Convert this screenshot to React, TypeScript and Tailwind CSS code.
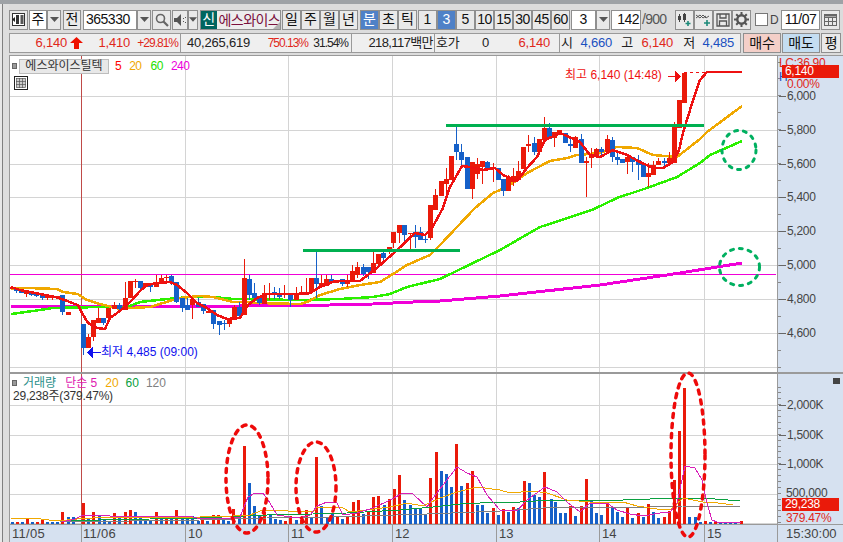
import React from "react";

type C = [number, "r" | "b", number, number, number?, number?];
const seg = (base: number, rows: C[]) =>
  rows.map(([x, c, t, b, h, l]) => ({
    x,
    c,
    t: base + t / 3,
    b: base + b / 3,
    h: base + (h ?? t) / 3,
    l: base + (l ?? b) / 3,
  }));

const candles = [
  ...seg(270, [
    [12, "r", 50, 58, 48, 58], [16, "b", 54, 64, 54, 70], [21, "b", 60, 68], [26, "r", 65, 72, 65, 80],
    [31, "b", 63, 75, 63, 78], [36, "b", 70, 78, 70, 80], [42, "b", 72, 85, 72, 90], [47, "r", 75, 85, 75, 91],
    [52, "r", 78, 85, 78, 91], [57, "r", 78, 85, 78, 88], [62, "b", 75, 125, 75, 134], [68, "r", 125, 134],
  ]),
  ...seg(250, [
    [83, "b", 222, 295, 222, 315], [88, "r", 262, 295, 252], [93, "r", 210, 262, 210, 272], [98, "r", 205, 218, 175],
    [103, "b", 205, 218, 205, 225], [108, "r", 175, 205], [114, "r", 165, 178, 155], [119, "b", 165, 178, 160, 186],
    [125, "r", 145, 180, 95], [130, "r", 93, 145], [135, "r", 92, 95, 88, 115], [140, "b", 92, 115, 92, 125],
    [145, "r", 100, 112], [150, "b", 105, 110, 105, 125], [156, "r", 95, 110, 75], [161, "r", 84, 95, 75],
    [166, "r", 80, 85, 74, 95], [171, "b", 78, 95, 75, 105], [176, "b", 95, 155, 95, 160], [182, "b", 145, 175, 145, 185],
    [187, "b", 165, 180, 145], [192, "r", 148, 165, 148, 206], [198, "b", 155, 172, 145], [203, "b", 163, 182, 163, 192],
    [208, "r", 182, 190], [213, "b", 180, 222, 180, 238], [219, "b", 213, 225, 213, 255], [224, "b", 218, 222, 210, 240],
    [229, "r", 205, 222, 205, 232], [234, "r", 170, 210, 165], [239, "b", 172, 198, 155, 205], [244, "r", 85, 195, 27],
    [249, "b", 88, 135, 75, 150], [254, "b", 128, 145, 100, 155], [259, "b", 138, 160, 138, 165], [264, "r", 130, 162, 105],
    [269, "r", 128, 135, 100, 150], [274, "b", 125, 133, 110, 147], [279, "b", 130, 140, 115, 148], [284, "r", 130, 135, 105, 145],
    [290, "b", 135, 150, 135, 170], [296, "r", 130, 150, 110, 150],
  ]),
  ...seg(215, [
    [301, "r", 230, 240, 212], [306, "r", 232, 240, 188], [311, "r", 190, 230], [316, "b", 188, 207, 110, 250],
    [321, "r", 203, 213, 180], [326, "r", 193, 213, 180], [331, "b", 193, 200, 180, 205], [336, "r", 198, 205],
    [342, "b", 192, 207, 192, 212], [347, "r", 195, 207, 180, 215], [352, "r", 168, 200, 150], [357, "r", 155, 180, 140, 190],
    [363, "b", 155, 178, 148, 182], [368, "b", 155, 172, 155, 192], [373, "r", 145, 175, 110], [378, "r", 117, 147, 117, 150],
    [383, "b", 115, 130, 108, 135], [389, "r", 95, 110, 95, 118], [393, "r", 52, 85, 52, 100], [399, "r", 30, 53, 30, 85],
    [404, "b", 30, 60, 30, 85], [410, "r", 53, 56, 53, 105], [415, "b", 52, 65, 30, 98], [420, "b", 52, 75, 35],
    [425, "b", 72, 74, 60, 85], [430, "r", -30, 70, -30, 75],
  ]),
  ...seg(100, [
    [435, "r", 285, 330, 268], [441, "r", 243, 288], [446, "r", 237, 252, 205, 285], [451, "r", 168, 240],
    [456, "b", 132, 155, 80, 180], [461, "b", 155, 180, 132, 205], [467, "b", 172, 267], [472, "r", 185, 267, 185, 297],
    [477, "r", 193, 222, 175, 237], [482, "r", 183, 202, 183, 252], [487, "b", 185, 210, 183], [493, "r", 204, 207, 190, 245],
    [498, "b", 205, 240], [503, "b", 237, 273, 237, 288], [508, "r", 235, 273, 225], [513, "r", 228, 245, 205, 258],
    [518, "r", 213, 240, 183], [523, "r", 140, 207], [528, "r", 132, 137, 105, 155], [534, "b", 130, 155, 110, 165],
    [539, "r", 118, 155], [544, "r", 85, 120, 52], [549, "b", 85, 117, 70], [554, "r", 95, 115, 95, 140],
    [559, "r", 90, 100], [565, "b", 98, 128], [570, "b", 132, 137, 115, 155], [575, "r", 112, 145, 108],
    [581, "b", 118, 188, 103], [586, "r", 183, 188, 170, 290], [591, "r", 168, 175, 145, 205], [596, "r", 148, 170, 145],
    [601, "b", 148, 155, 140, 172], [607, "r", 118, 155, 105], [612, "b", 120, 172, 110, 187], [617, "b", 172, 180, 155, 195],
    [622, "b", 178, 188], [627, "r", 170, 185, 170, 222], [632, "b", 170, 185, 170, 215], [638, "b", 180, 195, 165, 240],
    [643, "b", 190, 230], [648, "r", 220, 232, 190, 260], [653, "r", 195, 225, 183], [658, "r", 183, 195, 175],
    [664, "b", 183, 188, 175, 205], [669, "r", 175, 190, 155], [674, "r", 80, 190, 67],
  ]),
  ...seg(50, [[679, "r", 150, 235], [684, "r", 70, 160]]),
];

const vols: [number, "r" | "b", number][] = [
  [12,"b",2],[17,"r",2],[22,"b",2],[27,"r",5],[32,"b",2],[37,"r",2],[42,"r",4],[47,"b",2],[52,"b",2],[57,"b",2],
  [62,"r",12],[68,"b",7],[73,"b",7],[83,"r",21],[88,"b",6],[93,"r",12],[99,"b",8],[104,"b",4],[109,"b",2],[114,"r",11],
  [119,"b",6],[125,"r",12],[130,"r",14],[135,"b",12],[140,"b",7],[145,"b",3],[150,"b",3],[156,"r",12],[161,"b",6],[166,"r",6],
  [171,"b",7],[176,"r",14],[182,"b",8],[187,"b",8],[192,"b",8],[198,"b",3],
  [202,"r",6],[207,"b",3],[213,"r",9],[218,"r",9],[223,"b",5],[228,"b",3],[233,"r",15],[239,"b",8],[244,"r",78],[249,"b",41],
  [254,"b",18],[259,"b",9],[264,"r",12],[270,"b",10],[275,"b",5],[280,"b",4],[285,"r",3],[290,"r",8],[296,"b",4],[301,"r",4],
  [306,"r",14],[311,"b",7],[316,"r",67],[321,"b",18],[327,"b",6],[332,"b",10],[337,"r",7],[342,"b",5],[347,"r",8],[353,"r",22],
  [358,"r",24],[363,"b",10],[368,"r",12],[373,"r",27],[378,"r",28],[384,"b",19],[389,"r",25],[394,"r",35],[399,"r",49],[404,"b",24],
  [410,"b",19],[415,"b",15],[420,"b",15],[425,"b",9],[430,"r",46],[436,"r",72],[441,"b",53],[446,"b",50],[451,"b",37],[456,"r",80],
  [461,"b",38],[467,"r",41],[472,"r",53],[477,"b",19],[482,"b",19],[487,"b",11],[493,"r",16],[498,"b",9],[503,"r",15],[508,"b",12],
  [513,"r",17],[518,"b",16],[524,"r",43],[529,"b",41],[534,"b",29],[539,"b",27],[544,"r",52],[551,"b",25],[555,"b",22],[560,"b",11],
  [565,"b",11],[570,"r",18],[575,"b",8],[581,"r",18],[586,"r",45],[591,"b",24],[596,"b",11],[601,"b",9],[607,"r",22],[612,"b",16],
  [617,"b",12],[622,"b",7],[627,"r",16],[632,"b",6],[638,"r",11],[643,"b",7],[648,"r",20],[653,"b",12],[658,"b",6],[664,"r",7],
  [669,"r",13],[674,"r",44],[679,"r",93],[684,"r",136],[689,"b",7],[695,"b",7],[700,"b",2],[705,"r",3],[710,"b",2],[715,"r",3],
  [720,"b",1],[725,"b",1],[730,"b",1],[735,"b",1],[741,"r",3],
];

const ma5 = "11,287 20,290 35,293 45,295 55,297 65,300 72,303 78,305 82,313 88,323 97,328 105,329 110,318 117,313 125,307 132,300 140,291 147,285 157,283 170,282 177,285 187,293 197,303 207,308 217,315 227,319 240,318 248,305 257,298 267,294 297,294 310,293 320,287 335,281 360,281 378,267 395,252 415,233 425,235 432,228 443,208 450,187 462,166 470,167 483,170 495,168 503,175 517,181 527,168 537,157 545,140 560,133 567,136 580,142 590,155 600,157 613,150 627,155 640,162 653,168 663,168 673,162 679,150 683,133 690,110 700,80 707,72 742,72";
const ma20 = "11,289 27,288 57,289 63,292 78,294 87,300 100,304 120,309 130,308 150,307 163,303 180,298 200,296 213,297 233,302 247,302 257,303 300,304 307,302 320,295 340,289 360,285 380,282 393,274 407,265 430,255 440,245 475,208 493,193 507,187 527,173 550,161 567,158 577,155 600,153 617,147 637,148 653,155 677,157 700,139 707,132 742,106";
const ma60 = "11,314 33,311 53,308 100,307 127,307 140,302 167,299 190,297 213,297 233,299 300,300 340,299 373,297 390,294 407,287 440,279 500,250 540,227 592,210 617,198 647,188 677,177 700,163 710,155 742,141";
const ma240 = "11,306 53,306 73,306 130,306 240,306 330,305 373,304 413,302 440,301 500,296 600,285 680,273 742,263";

const vMag = "62,522 75,519 83,515 95,516 105,515 115,517 125,516 135,516 160,517 190,516 200,519 233,518 240,517 248,497 255,493 263,493 270,503 277,515 297,518 310,515 317,506 327,502 337,503 343,515 357,513 373,508 390,500 403,493 413,494 427,507 433,498 457,467 467,473 477,477 487,495 500,510 517,511 527,500 545,487 557,492 567,502 580,512 590,503 607,503 617,510 630,514 643,516 660,513 670,512 677,503 685,466 695,468 702,480 708,507 712,520 717,522 741,522";
const vYel = "11,518 33,518 57,521 77,519 110,517 200,517 233,516 250,515 263,510 313,512 317,507 343,508 350,512 390,507 407,503 423,506 440,498 457,492 477,487 500,490 510,493 533,491 547,493 567,500 590,502 623,502 637,506 657,509 670,510 683,498 703,502 718,503 733,505";
const vGrn = "60,521 100,520 200,518 267,515 313,514 347,513 400,510 433,507 460,504 500,502 520,502 553,500 623,500 677,498 703,498 740,501";
const vGry = "60,522 200,520 267,518 333,517 427,514 500,511 543,508 650,507 683,506 740,506";

const dayX = [81, 185, 288, 392, 496, 599, 704];
const RED = "#ea1a0a";
const BLUE = "#1560c8";

const priceY = [96, 130, 164, 197, 231, 265, 299, 333];
const priceL = ["6,000", "5,800", "5,600", "5,400", "5,200", "5,000", "4,800", "4,600"];
const minorUp = Array.from({ length: 19 }, (_, i) => 62 + i * 16.95);
const minorDn = Array.from({ length: 24 }, (_, i) => 387 + i * 5.9);

function Btn({
  w,
  ml = "",
  bg = "bg-[#e9e9e9]",
  children,
  cls = "text-[#111]",
}: {
  w: string;
  ml?: string;
  bg?: string;
  children?: React.ReactNode;
  cls?: string;
}) {
  return (
    <div className={`${w} ${ml} ${bg} ${cls} h-[20px] flex items-center border border-[#8f8f8f] text-[14px] ${cls.includes("justify-") ? "" : "justify-center"}`}>
      {children}
    </div>
  );
}

function Arrow({ w, ml = "" }: { w: string; ml?: string }) {
  return (
    <Btn w={w} ml={ml}>
      <svg width="9" height="5" viewBox="0 0 9 5"><path d="M0 0h9L4.500 5z" fill="#555" /></svg>
    </Btn>
  );
}

export default function App() {
  return (
    <div
      className="w-[843px] h-[542px] overflow-hidden flex flex-col bg-[#dcdcdc] text-[#222]"
      style={{ fontFamily: '"Liberation Sans","Noto Sans CJK KR",sans-serif' }}
    >
      <div className="h-[4px] shrink-0 bg-[#9ea2a6]" />
      <div className="flex flex-1 min-h-0">
        <div className="w-[9px] shrink-0 flex">
          <div className="w-[2px] bg-[#e8e8e8]" />
          <div className="w-[1px] bg-[#808080]" />
          <div className="flex-1 bg-[#dedede]" />
        </div>
        <div className="flex-1 min-w-0 flex flex-col">
          {/* toolbar */}
          <div className="flex items-center h-[21px] mt-[5px] shrink-0">
            <Btn w="w-[19px]">
              <svg width="15" height="15" viewBox="0 0 15 15">
                <rect x="1.500" y="1.500" width="12" height="12" fill="#fff" stroke="#333" />
                <rect x="5" y="3" width="3" height="9" fill="#333" />
                <rect x="9.500" y="3" width="3" height="9" fill="#555" />
                <path d="M4 5v5L1 7.500z" fill="#222" />
              </svg>
            </Btn>
            <Btn w="w-[18px]" ml="ml-[1px]" bg="bg-white">주</Btn>
            <Arrow w="w-[14px]" />
            <Btn w="w-[18px]" ml="ml-[2px]">전</Btn>
            <Btn w="w-[54px]" ml="ml-[2px]" bg="bg-white" cls="text-[#111] justify-start pl-[2px] tracking-[-0.5px]">365330</Btn>
            <Arrow w="w-[14px]" />
            <Btn w="w-[19px]" ml="ml-[1px]">
              <svg width="14" height="14" viewBox="0 0 14 14" fill="none" stroke="#666" strokeWidth="1.600">
                <circle cx="5.500" cy="5.500" r="4" />
                <path d="M8.500 8.500L13 13" strokeWidth="2.200" />
              </svg>
            </Btn>
            <Btn w="w-[16px]" ml="ml-[1px]">
              <svg width="13" height="12" viewBox="0 0 13 12"><path d="M0 4h3l4-4v12L3 8H0z" fill="#555" /><path d="M9 4h1v1H9zM11 3h1v1h-1zM9 7h1v1H9zM11 8h1v1h-1z" fill="#555" /></svg>
            </Btn>
            <Arrow w="w-[10px]" />
            <div className="ml-[2px] w-[81px] h-[20px] flex border border-[#8f8f8f] bg-[#ededed] relative overflow-hidden">
              <div className="w-[17px] bg-[#00655f] text-white text-[14px] flex items-center justify-center">신</div>
              <div className="pl-[2px] text-[14px] tracking-[-0.6px] text-[#7a0f3c] whitespace-nowrap leading-[18px]">에스와이스</div>
              <div className="absolute right-0 bottom-0 w-0 h-0 border-l-[7px] border-l-transparent border-b-[7px] border-b-[#b0b0b0]" />
            </div>
            <Btn w="w-[19px]" ml="ml-[1px]">일</Btn>
            <Btn w="w-[19px]">주</Btn>
            <Btn w="w-[19px]">월</Btn>
            <Btn w="w-[19px]">년</Btn>
            <Btn w="w-[19px]" ml="ml-[2px]" bg="bg-[#4f81c7]" cls="text-white">분</Btn>
            <Btn w="w-[19px]">초</Btn>
            <Btn w="w-[19px]">틱</Btn>
            <Btn w="w-[19px]" ml="ml-[1px]">1</Btn>
            <Btn w="w-[19px]" bg="bg-[#4f81c7]" cls="text-white">3</Btn>
            <Btn w="w-[19px]">5</Btn>
            <Btn w="w-[19px]" cls="text-[#111] tracking-[-0.5px]">10</Btn>
            <Btn w="w-[19px]" cls="text-[#111] tracking-[-0.5px]">15</Btn>
            <Btn w="w-[19px]" cls="text-[#111] tracking-[-0.5px]">30</Btn>
            <Btn w="w-[19px]" cls="text-[#111] tracking-[-0.5px]">45</Btn>
            <Btn w="w-[19px]" cls="text-[#111] tracking-[-0.5px]">60</Btn>
            <Btn w="w-[25px]" ml="ml-[1px]" bg="bg-white">3</Btn>
            <Arrow w="w-[14px]" />
            <Btn w="w-[30px]" ml="ml-[1px]" bg="bg-white" cls="text-[#111] justify-end pr-[1px] tracking-[-0.5px]">142</Btn>
            <div className="w-[34px] text-[14px] text-[#555] pl-[1px] tracking-[-0.7px]">/900</div>
            <Btn w="w-[19px]">
              <svg width="15" height="13" viewBox="0 0 15 13"><path d="M1 3h3v4H1zM6 1h3v6H6z" fill="#444" /><path d="M2.500 1v8M7.500 0v9" stroke="#444" /><path d="M11 8v5M8.500 10.500h5" stroke="#1d8a7a" strokeWidth="1.600" /></svg>
            </Btn>
            <Btn w="w-[19px]">
              <svg width="16" height="13" viewBox="0 0 16 13" fill="none"><path d="M0 2l4 3 3-3 3 3 3-2M0 5l4-3 3 3 3-2" stroke="#555" /><path d="M11 7v6M8 10h6" stroke="#1d8a7a" strokeWidth="1.600" /></svg>
            </Btn>
            <Btn w="w-[19px]">
              <svg width="14" height="14" viewBox="0 0 14 14" fill="none" stroke="#555" strokeWidth="1.300"><path d="M1 1h12v12H1z" /><path d="M4 1v4h6V1M3.500 13V8h7v5" /></svg>
            </Btn>
            <Btn w="w-[19px]">
              <svg width="15" height="15" viewBox="0 0 15 15"><circle cx="7.500" cy="7.500" r="4.200" fill="none" stroke="#555" strokeWidth="2.400" /><path d="M7.500 0v3M7.500 12v3M0 7.500h3M12 7.500h3M2.200 2.200l2 2M10.800 10.800l2 2M12.800 2.200l-2 2M4.200 10.800l-2 2" stroke="#555" strokeWidth="2" /></svg>
            </Btn>
            <div className="ml-[4px] w-[13px] h-[13px] bg-white border border-[#777]" />
            <div className="w-[10px] ml-[2px] text-[12px] text-[#444]">D</div>
            <Btn w="w-[39px]" ml="ml-[1px]" bg="bg-white" cls="text-[#111] tracking-[-0.5px]">11/07</Btn>
            <Btn w="w-[19px]" ml="ml-[1px]">
              <svg width="13" height="12" viewBox="0 0 13 12" fill="none" stroke="#666"><rect x="0.500" y="0.500" width="12" height="11" /><path d="M0 3.500h13M0 7.500h13M4.500 3v9M8.500 3v9" /><path d="M0 1.500h13" strokeWidth="2" /></svg>
            </Btn>
          </div>
          {/* info row */}
          <div className="flex items-center h-[20px] mt-[3px] shrink-0 text-[13px] tracking-[-0.2px]">
            <div className="w-[732px] h-[20px] flex bg-[#efefef] border border-[#9a9a9a] leading-[18px] whitespace-nowrap">
              <div className="w-[171px] flex border-r border-[#9a9a9a] text-[#e0281a]">
                <span className="w-[57px] text-right">6,140</span>
                <svg className="ml-[3px] mt-[3px]" width="13" height="12" viewBox="0 0 13 12"><path d="M6.500 0L13 6H9v6H4V6H0z" fill="#ee1100" /></svg>
                <span className="w-[47px] text-right">1,410</span>
                <span className="w-[48px] text-right text-[12px] tracking-[-1px]">+29.81%</span>
              </div>
              <div className="w-[171px] flex border-r border-[#9a9a9a]">
                <span className="w-[69px] text-right">40,265,619</span>
                <span className="w-[58px] text-right text-[#e0281a] text-[12px] tracking-[-1px]">750.13%</span>
                <span className="w-[40px] text-right text-[12px] tracking-[-1px]">31.54%</span>
              </div>
              <div className="w-[83px] border-r border-[#9a9a9a] text-right pr-[1px] tracking-[-0.6px]">218,117백만</div>
              <div className="w-[125px] flex border-r border-[#9a9a9a]">
                <span className="w-[28px] pl-[1px]">호가</span>
                <span className="w-[26px] text-right">0</span>
                <span className="w-[61px] text-right text-[#e0281a]">6,140</span>
              </div>
              <div className="flex-1 flex">
                <span className="w-[12px] pl-[1px]">시</span>
                <span className="w-[40px] text-right text-[#1a4fc0]">4,660</span>
                <span className="w-[21px] text-right">고</span>
                <span className="w-[40px] text-right text-[#e0281a]">6,140</span>
                <span className="w-[22px] text-right">저</span>
                <span className="w-[39px] text-right text-[#1a4fc0]">4,485</span>
              </div>
            </div>
            <Btn w="w-[38px]" ml="ml-[2px]" bg="bg-[#f4cfc8]">매수</Btn>
            <Btn w="w-[38px]" ml="ml-[1px]" bg="bg-[#c4ddf1]">매도</Btn>
            <Btn w="w-[20px]" ml="ml-[1px]">평</Btn>
          </div>
          {/* chart */}
          <div className="mt-[2px] flex-1 min-h-0 flex flex-col border-t border-l border-[#9a9a9a] bg-white">
            <div className="h-[316px] shrink-0 flex">
              <div className="relative w-[767px] shrink-0">
                <svg width="767" height="316" viewBox="10 56 767 316" className="block" shapeRendering="crispEdges">
                  {[...priceY, 367].map((y) => <line key={y} x1="10" x2="777" y1={y} y2={y} stroke="#d4d4d4" />)}
                  {dayX.map((x) => <line key={x} x1={x} x2={x} y1="56" y2="372" stroke="#d4d4d4" />)}
                  <line x1="81" x2="81" y1="56" y2="372" stroke="#bf4a48" />
                  <line x1="10" x2="776" y1="274.500" y2="274.500" stroke="#f000d8" />
                  <polyline points={ma240} fill="none" stroke="#f000d8" strokeWidth="3" />
                  <polyline points={ma60} fill="none" stroke="#2cf000" strokeWidth="2.500" />
                  <polyline points={ma20} fill="none" stroke="#f0a800" strokeWidth="2.500" />
                  {candles.map((k, i) => (
                    <g key={i} fill={k.c === "r" ? RED : BLUE}>
                      <rect x={k.x} y={k.h} width="1" height={Math.max(1, k.l - k.h)} />
                      <rect x={k.x - 2} y={k.t} width="4.500" height={Math.max(1, k.b - k.t)} />
                    </g>
                  ))}
                  <polyline points={ma5} fill="none" stroke="#ee1111" strokeWidth="2.500" />
                  <line x1="303" x2="460" y1="250" y2="250" stroke="#00b050" strokeWidth="3" />
                  <line x1="446" x2="704" y1="125.500" y2="125.500" stroke="#00b050" strokeWidth="3" />
                  <line x1="684" x2="706" y1="72.500" y2="72.500" stroke="#ee1111" strokeDasharray="3 3" />
                  <path d="M668 76.500h8" stroke="#ee1111" />
                  <path d="M675 71v11l6-5.500z" fill="#ee1111" />
                  <path d="M101 352.500H92" stroke="#1010ee" />
                  <path d="M93 347v11l-6-5.500z" fill="#1010ee" />
                  <g shapeRendering="geometricPrecision" fill="none" strokeLinecap="round">
                    <ellipse cx="739" cy="150" rx="17" ry="19.500" stroke="#00b060" strokeWidth="3" strokeDasharray="3 6" />
                    <ellipse cx="739.500" cy="267" rx="20" ry="18.500" stroke="#00b060" strokeWidth="3" strokeDasharray="3 6" />
                  </g>
                </svg>
                <div className="absolute left-[1px] top-[0px] flex items-center h-[20px] text-[12px] tracking-[-0.5px] leading-none whitespace-nowrap">
                  <div className="w-[5px] h-[6px] ml-[1px] bg-[#999] border border-[#666]" />
                  <div className="ml-[2px] w-[90px] h-[15px] bg-[#e8e8e8] border border-[#bdbdbd] text-[#333] text-center leading-[13px] tracking-normal">에스와이스틸텍</div>
                  <span className="ml-[6px] text-[#f00]">5</span>
                  <span className="ml-[8px] text-[#f0a800]">20</span>
                  <span className="ml-[9px] text-[#22e000]">60</span>
                  <span className="ml-[8px] text-[#ee00dd]">240</span>
                </div>
                <div className="absolute left-[4px] top-[20px] w-[14px] h-[14px] border border-[#222] bg-white flex items-center justify-center">
                  <svg width="10" height="10" viewBox="0 0 10 10" fill="#ccc" stroke="#555" strokeWidth="0.700"><rect x="0.500" y="0.500" width="9" height="9" /><path d="M0 3.500h10M0 6.500h10M3.500 0v10M6.500 0v10" /></svg>
                </div>
                <div className="absolute left-[555px] top-[12px] text-[12px] text-[#ee1111] whitespace-nowrap leading-[14px]">최고 6,140 (14:48)</div>
                <div className="absolute left-[91px] top-[289px] text-[12px] text-[#1010ee] whitespace-nowrap leading-[14px]">최저 4,485 (09:00)</div>
              </div>
              <div className="relative flex-1 bg-[#d6e1f0] border-l border-[#9a9a9a] overflow-hidden text-[12px] leading-[14px] tracking-[-0.3px] text-[#444]">
                <svg width="4" height="316" viewBox="0 56 4 316" className="absolute left-0 top-0" shapeRendering="crispEdges">
                  {minorUp.map((y) => <line key={y} x1="0" x2="3" y1={y} y2={y} stroke="#888" />)}
                </svg>
                <div className="absolute left-[1px] top-[0px] text-[#e0281a] whitespace-nowrap">LC:36.90</div>
                <div className="absolute left-[1px] top-[14px] text-[#1a4fc0]">H</div>
                <div className="absolute left-[9px] top-[21px] text-[#e0281a]">0.00%</div>
                {priceY.map((y, i) => (
                  <div key={y} className="absolute left-[1px] flex items-center" style={{ top: y - 63 }}>
                    <div className="w-[7px] h-[1px] bg-[#666] mr-[1px]" />
                    {priceL[i]}
                  </div>
                ))}
                <div className="absolute left-[4px] top-[9px] w-[57px] h-[13px] bg-[#ea1a0a] text-white leading-[13px] pl-[3px]">6,140</div>
              </div>
            </div>
            <div className="h-[2px] shrink-0 bg-[#9a9a9a]" />
            <div className="h-[150px] shrink-0 flex">
              <div className="relative w-[767px] shrink-0">
                <svg width="767" height="150" viewBox="10 374 767 150" className="block overflow-visible" shapeRendering="crispEdges">
                  {[405, 435, 464, 494, 523].map((y) => <line key={y} x1="10" x2="777" y1={y} y2={y} stroke="#d4d4d4" />)}
                  {dayX.map((x) => <line key={x} x1={x} x2={x} y1="374" y2="524" stroke="#d4d4d4" />)}
                  <line x1="81" x2="81" y1="374" y2="524" stroke="#bf4a48" />
                  {vols.map(([x, c, h], i) => (
                    <rect key={i} x={x - 1.500} y={524 - h} width="3.500" height={h} fill={c === "r" ? RED : BLUE} />
                  ))}
                  <polyline points={vGry} fill="none" stroke="#808080" />
                  <polyline points={vGrn} fill="none" stroke="#0aa040" />
                  <polyline points={vYel} fill="none" stroke="#f0a800" />
                  <polyline points={vMag} fill="none" stroke="#d820b8" />
                  <g shapeRendering="geometricPrecision" fill="none" stroke="#ee0a0a" strokeWidth="3.500" strokeDasharray="4 6" strokeLinecap="round">
                    <ellipse cx="247" cy="479" rx="21" ry="54" />
                    <ellipse cx="316" cy="487" rx="20" ry="45" />
                    <ellipse cx="688" cy="455" rx="17" ry="82" />
                  </g>
                </svg>
                <div className="absolute left-[1px] top-[2px] flex items-center h-[14px] text-[12px] leading-none whitespace-nowrap">
                  <div className="w-[5px] h-[6px] ml-[1px] bg-[#999] border border-[#666]" />
                  <span className="ml-[6px] text-[#2a8f8a]">거래량</span>
                  <span className="ml-[9px] text-[#e018b0]">단순 5</span>
                  <span className="ml-[8px] text-[#f0a800]">20</span>
                  <span className="ml-[7px] text-[#0aa040]">60</span>
                  <span className="ml-[7px] text-[#808080]">120</span>
                </div>
                <div className="absolute left-[3px] top-[15px] text-[12px] tracking-[-0.2px] leading-[14px] text-[#333] whitespace-nowrap">29,238주(379.47%)</div>
              </div>
              <div className="relative flex-1 bg-[#d6e1f0] border-l border-[#9a9a9a] overflow-hidden text-[12px] leading-[14px] tracking-[-0.3px] text-[#444]">
                <svg width="4" height="150" viewBox="0 374 4 150" className="absolute left-0 top-0" shapeRendering="crispEdges">
                  {minorDn.map((y) => <line key={y} x1="0" x2="3" y1={y} y2={y} stroke="#888" />)}
                </svg>
                <div className="absolute left-[55px] top-[4px] w-[7px] h-[6px] bg-[#444]" />
                {[["2,000K", 405], ["1,500K", 435], ["1,000K", 464]].map(([t, y]) => (
                  <div key={t as string} className="absolute left-[1px] flex items-center" style={{ top: (y as number) - 381 }}>
                    <div className="w-[7px] h-[1px] bg-[#666] mr-[1px]" />
                    {t}
                  </div>
                ))}
                <div className="absolute left-[8px] top-[112px]">500,000</div>
                <div className="absolute left-[4px] top-[124px] w-[57px] h-[13px] bg-[#ea1a0a] text-white leading-[13px] pl-[3px]">29,238</div>
                <div className="absolute left-[8px] top-[137px] text-[#e0281a]">379.47%</div>
              </div>
            </div>
            <div className="flex-1 flex bg-[#d6e1f0] border-t border-[#9a9a9a] text-[13px] text-[#444] leading-[18px]">
              <div className="relative w-[767px] shrink-0">
                <span className="absolute left-[2px] tracking-[0.3px]">11/05</span>
                <span className="absolute left-[73px] tracking-[0.3px]">11/06</span>
                {[[185, "10"], [288, "11"], [392, "12"], [496, "13"], [599, "14"], [704, "15"]].map(([x, t]) => (
                  <span key={t as string} className="absolute pl-[2px] border-l border-[#9a9a9a]" style={{ left: (x as number) - 10 }}>{t}</span>
                ))}
                <div className="absolute left-[71px] top-0 w-[1px] h-[18px] bg-[#9a9a9a]" />
              </div>
              <div className="flex-1 border-l border-[#9a9a9a] pl-[8px]">15:30:00</div>
            </div>
          </div>
        </div>
      </div>
    </div>
  );
}
